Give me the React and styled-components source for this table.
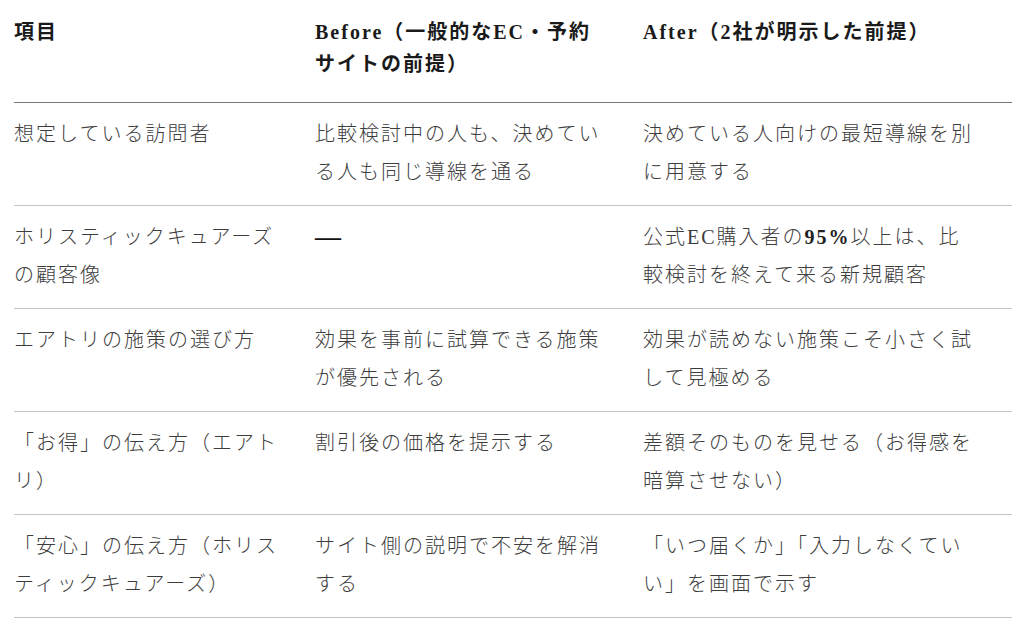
import styled, { createGlobalStyle } from 'styled-components'

const GlobalStyle = createGlobalStyle`
  body {
    margin: 0;
    background: #fff;
    font-family: 'Liberation Serif', 'Noto Sans CJK JP', serif;
  }
`

const Page = styled.div`
  padding: 0 14px;
`

const Table = styled.table`
  width: 998px;
  border-collapse: collapse;
  table-layout: fixed;
  letter-spacing: 2px;
  font-size: 20px;
`

const Th = styled.th`
  text-align: left;
  vertical-align: top;
  font-weight: 700;
  color: #1a1a1a;
  line-height: 32px;
  padding: 16px 32px 22px 0;
  border-bottom: 1px solid #7a7a7a;
`

const Td = styled.td`
  vertical-align: top;
  color: #3d3d3d;
  font-weight: 300;
  line-height: 38px;
  padding: 12px 32px 14px 0;
  border-bottom: 1px solid #c4c4c4;
`

const Strong = styled.strong`
  font-weight: 700;
  color: #222;
`

const Dash = styled.span`
  font-weight: 700;
  font-size: 26px;
  color: #111;
  letter-spacing: 0;
`

const rows = [
  ['想定している訪問者', '比較検討中の人も、決めている人も同じ導線を通る', '決めている人向けの最短導線を別に用意する'],
  ['ホリスティックキュアーズの顧客像', <Dash>—</Dash>, <>公式EC購入者の<Strong>95%</Strong>以上は、比較検討を終えて来る新規顧客</>],
  ['エアトリの施策の選び方', '効果を事前に試算できる施策が優先される', '効果が読めない施策こそ小さく試して見極める'],
  ['「お得」の伝え方（エアトリ）', '割引後の価格を提示する', '差額そのものを見せる（お得感を暗算させない）'],
  ['「安心」の伝え方（ホリスティックキュアーズ）', 'サイト側の説明で不安を解消する', '「いつ届くか」「入力しなくていい」を画面で示す'],
]

function App() {
  return (
    <Page>
      <GlobalStyle />
      <Table>
        <colgroup>
          <col style={{ width: 301 }} />
          <col style={{ width: 328 }} />
          <col style={{ width: 369 }} />
        </colgroup>
        <thead>
          <tr>
            <Th>項目</Th>
            <Th>Before（一般的なEC・予約サイトの前提）</Th>
            <Th>After（2社が明示した前提）</Th>
          </tr>
        </thead>
        <tbody>
          {rows.map((row) => (
            <tr key={row[0]}>
              {row.map((cell, i) => (
                <Td key={i}>{cell}</Td>
              ))}
            </tr>
          ))}
        </tbody>
      </Table>
    </Page>
  )
}

export default App
